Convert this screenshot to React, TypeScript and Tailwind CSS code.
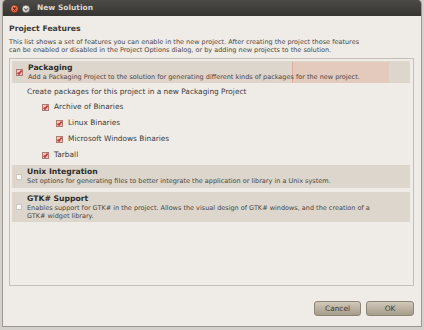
import React from 'react';

function CheckBox({ checked }: { checked: boolean }) {
  if (!checked) {
    return <div className="w-[6px] h-[6px] shrink-0 bg-white border border-[#cdc8bf]" />;
  }
  return (
    <svg width="7" height="7" viewBox="0 0 7 7" className="shrink-0">
      <rect x="0.5" y="0.5" width="6" height="6" fill="#e8cdc7" stroke="#b07a72" />
      <path d="M1.6 3.6 L3 5.1 L5.6 1.6" fill="none" stroke="#c7332b" strokeWidth="1.6" />
    </svg>
  );
}

function FeatureRow({
  title,
  lines,
  checked,
  h,
  children,
}: {
  title: string;
  lines: string[];
  checked: boolean;
  h: string;
  children?: React.ReactNode;
}) {
  return (
    <div className={`relative flex items-center gap-[5px] pl-[4px] bg-[#dcd6cd] ${h}`}>
      {children}
      <CheckBox checked={checked} />
      <div className="relative self-start pt-[2px] whitespace-nowrap">
        <div className="text-[7.7px] leading-[10px] font-bold text-[#2e2d2a]">{title}</div>
        {lines.map((l, i) => (
          <div key={i} className="text-[6.5px] leading-[8px] text-[#4a4843]">
            {l}
          </div>
        ))}
      </div>
    </div>
  );
}

function SubOption({ label, indent }: { label: string; indent: string }) {
  return (
    <div className={`flex items-center gap-[5px] h-[16px] ${indent}`}>
      <CheckBox checked />
      <span className="text-[7.4px] text-[#3c3b37] whitespace-nowrap">{label}</span>
    </div>
  );
}

export default function App() {
  return (
    <div className="w-[424px] h-[330px] bg-[#d3d0cb] overflow-hidden font-['DejaVu_Sans',sans-serif]">
      <div className="ml-[2px] w-[420px] h-[327px] flex flex-col bg-[#efebe7] border-x border-b border-[#9c9891] rounded-t-[4px] overflow-hidden">
        {/* title bar */}
        <div className="h-[16px] shrink-0 flex items-center bg-gradient-to-b from-[#4d4b47] to-[#363532]">
          <svg width="30" height="16" viewBox="0 0 30 16" className="ml-[4px]">
            <defs>
              <radialGradient id="cl" cx="0.4" cy="0.35" r="0.7">
                <stop offset="0" stopColor="#f49a76" />
                <stop offset="1" stopColor="#d3472a" />
              </radialGradient>
              <radialGradient id="mn" cx="0.4" cy="0.35" r="0.7">
                <stop offset="0" stopColor="#f2f0ec" />
                <stop offset="1" stopColor="#b4b1aa" />
              </radialGradient>
            </defs>
            <circle cx="7.5" cy="9" r="4" fill="url(#cl)" stroke="#3a1c12" strokeWidth="0.6" />
            <path d="M6 7.5 L9 10.5 M9 7.5 L6 10.5" stroke="#5b2212" strokeWidth="1.1" />
            <circle cx="19" cy="9" r="4" fill="url(#mn)" stroke="#2b2a27" strokeWidth="0.6" />
            <path d="M17.2 8.3 L19 10.2 L20.8 8.3" fill="none" stroke="#6d6a64" strokeWidth="1.1" />
          </svg>
          <span className="text-[7.5px] font-bold text-[#dcd8cf]">New Solution</span>
        </div>

        {/* body */}
        <div className="flex flex-col pl-[6px] pr-[7px]">
          <div className="pt-[8px] text-[7.7px] leading-[10px] font-bold text-[#3c3b37]">Project Features</div>
          <div className="mt-[4px] text-[6.5px] leading-[8px] text-[#4a4843] whitespace-nowrap">
            <div>This list shows a set of features you can enable in the new project. After creating the project those features</div>
            <div>can be enabled or disabled in the Project Options dialog, or by adding new projects to the solution.</div>
          </div>

          <div className="mt-[4px] h-[228px] border border-[#c5c0b7] pt-[2px] pl-[2px] pr-[3px] flex flex-col">
            <FeatureRow
              title="Packaging"
              checked
              h="h-[22px]"
              lines={['Add a Packaging Project to the solution for generating different kinds of packages for the new project.']}
            >
              <div className="absolute left-[13px] right-[118px] top-[12px] bottom-0 bg-[#e4d0c7]/50" />
              <div className="absolute left-[280px] w-[97px] top-[1px] bottom-0 bg-[#e6c4b7]/70 border-l border-[#e0ab9c]" />
            </FeatureRow>

            <div className="mt-[2px] h-[14px] flex items-center pl-[15px] text-[7.4px] text-[#3c3b37] whitespace-nowrap">
              Create packages for this project in a new Packaging Project
            </div>
            <SubOption label="Archive of Binaries" indent="pl-[30px]" />
            <SubOption label="Linux Binaries" indent="pl-[44px]" />
            <SubOption label="Microsoft Windows Binaries" indent="pl-[44px]" />
            <SubOption label="Tarball" indent="pl-[30px]" />

            <div className="mt-[2px]">
              <FeatureRow
                title="Unix Integration"
                checked={false}
                h="h-[23px]"
                lines={['Set options for generating files to better integrate the application or library in a Unix system.']}
              />
            </div>
            <div className="mt-[4px]">
              <FeatureRow
                title="GTK# Support"
                checked={false}
                h="h-[30px]"
                lines={[
                  'Enables support for GTK# in the project. Allows the visual design of GTK# windows, and the creation of a',
                  'GTK# widget library.',
                ]}
              />
            </div>
          </div>

          <div className="mt-[15px] flex justify-end gap-[5px]">
            <button className="w-[47px] h-[15px] rounded-[3px] border border-[#8d8576] bg-gradient-to-b from-[#d0c8ba] to-[#a69c8b] text-[7.4px] text-[#3c3b37]">
              Cancel
            </button>
            <button className="w-[48px] h-[15px] rounded-[3px] border border-[#8d8576] bg-gradient-to-b from-[#d0c8ba] to-[#a69c8b] text-[7.4px] text-[#3c3b37]">
              OK
            </button>
          </div>
        </div>
      </div>
    </div>
  );
}
